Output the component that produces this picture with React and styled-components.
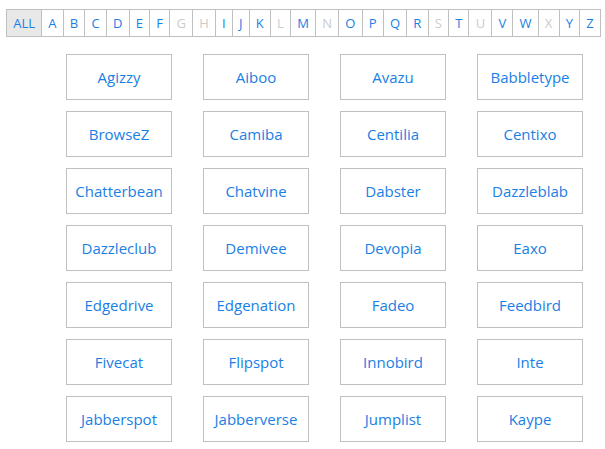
import styled, { createGlobalStyle } from "styled-components"

const GlobalStyle = createGlobalStyle`
  body {
    margin: 0;
    background: #ffffff;
    font-family: "Open Sans", "Noto Sans", sans-serif;
  }
`

const Page = styled.div`
  padding: 9px 6px 0 6px;
`

const LetterBar = styled.div`
  display: inline-flex;
  border: 1px solid #c0c0c0;
  height: 26px;
`

const Letter = styled.span`
  display: flex;
  align-items: center;
  justify-content: center;
  padding: 0 6.17px;
  font-size: 13px;
  color: ${(p) => (p.$disabled ? "#cccccc" : "#1a80e4")};
  background: ${(p) => (p.$active ? "#e8e8e8" : "#ffffff")};
  border-left: 1px solid #c0c0c0;
  cursor: ${(p) => (p.$disabled ? "default" : "pointer")};

  &:first-child {
    border-left: none;
  }
`

const Grid = styled.div`
  display: grid;
  grid-template-columns: repeat(4, 106px);
  grid-auto-rows: 46px;
  column-gap: 31px;
  row-gap: 11px;
  margin: 17px 0 0 60px;
`

const Company = styled.div`
  display: flex;
  align-items: center;
  justify-content: center;
  border: 1px solid #c0c0c0;
  font-size: 15px;
  color: #1a80e4;
  cursor: pointer;
`

const letters = "ABCDEFGHIJKLMNOPQRSTUVWXYZ".split("")
const disabled = ["G", "H", "L", "N", "S", "U", "X"]

const companies = [
  "Agizzy", "Aiboo", "Avazu", "Babbletype",
  "BrowseZ", "Camiba", "Centilia", "Centixo",
  "Chatterbean", "Chatvine", "Dabster", "Dazzleblab",
  "Dazzleclub", "Demivee", "Devopia", "Eaxo",
  "Edgedrive", "Edgenation", "Fadeo", "Feedbird",
  "Fivecat", "Flipspot", "Innobird", "Inte",
  "Jabberspot", "Jabberverse", "Jumplist", "Kaype",
]

export default function App() {
  return (
    <Page>
      <GlobalStyle />
      <LetterBar>
        <Letter $active>ALL</Letter>
        {letters.map((l) => (
          <Letter key={l} $disabled={disabled.includes(l)}>
            {l}
          </Letter>
        ))}
      </LetterBar>
      <Grid>
        {companies.map((c) => (
          <Company key={c}>{c}</Company>
        ))}
      </Grid>
    </Page>
  )
}
